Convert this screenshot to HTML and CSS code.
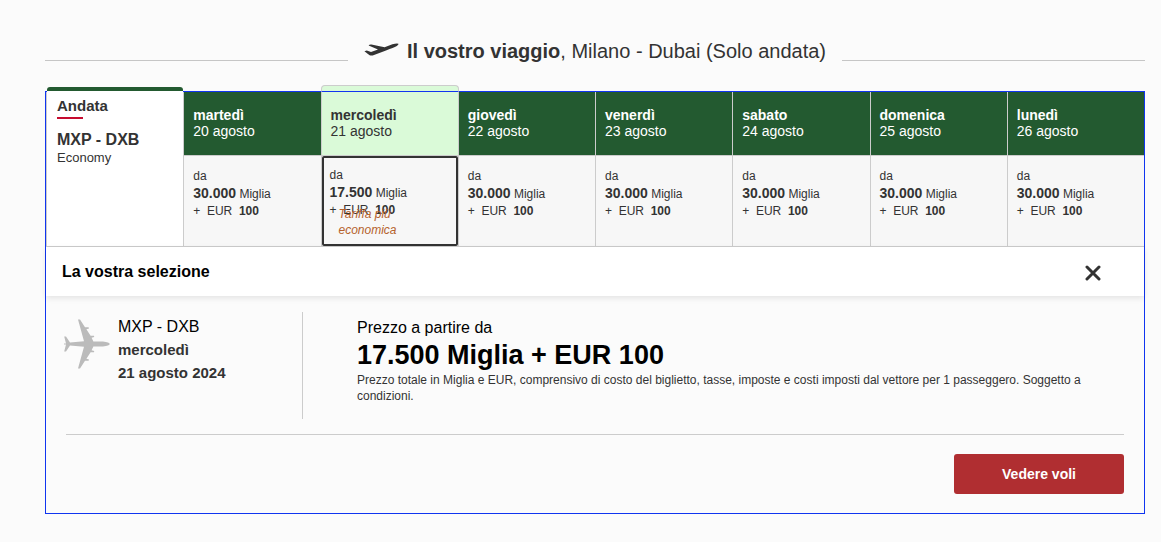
FILE: index.html
```html
<!DOCTYPE html>
<html lang="it">
<head>
    <meta charset="UTF-8">
    <meta name="viewport" content="width=device-width, initial-scale=1.0">
    <title>Il vostro viaggio</title>
    <link rel="stylesheet" href="styles.css">
</head>
<body>
    <main class="page">
        <div class="trip-title">
            <svg class="takeoff" width="35" height="14" viewBox="0 0 35 14">
                <path fill="#333" d="M0.4 8.2 L2.8 7.4 L7 9 L14 6.6 L4.6 2.4 Q5.4 1.4 7.4 1.6 L20.6 4.2 L28.4 1.2 Q33 -0.1 34.4 0.7 Q35 1.7 32.4 3.2 Q30 4.4 22 7.4 L10 12 Q7.6 12.9 5.6 12.2 Z"/>
            </svg>
            <h1><strong>Il vostro viaggio</strong>, Milano - Dubai (Solo andata)</h1>
        </div>
        <section class="fares">
            <table class="calendar">
                <thead>
                    <tr>
                        <th class="route" rowspan="2" scope="row">
                            <div class="direction">Andata</div>
                            <div class="airports">MXP - DXB</div>
                            <div class="cabin">Economy</div>
                        </th>
                        <th class="day" scope="col"><b>martedì</b>20 agosto</th>
                        <th class="day active" scope="col"><b>mercoledì</b>21 agosto</th>
                        <th class="day" scope="col"><b>giovedì</b>22 agosto</th>
                        <th class="day" scope="col"><b>venerdì</b>23 agosto</th>
                        <th class="day" scope="col"><b>sabato</b>24 agosto</th>
                        <th class="day" scope="col"><b>domenica</b>25 agosto</th>
                        <th class="day" scope="col"><b>lunedì</b>26 agosto</th>
                    </tr>
                    <tr>
                        <td><button class="price" type="button">da<span><b>30.000</b> Miglia</span><span>+ &nbsp;EUR &nbsp;<strong>100</strong></span></button></td>
                        <td><button class="price selected" type="button">da<span><b>17.500</b> Miglia</span><span>+ &nbsp;EUR &nbsp;<strong>100</strong></span><em>Tariffa più economica</em></button></td>
                        <td><button class="price" type="button">da<span><b>30.000</b> Miglia</span><span>+ &nbsp;EUR &nbsp;<strong>100</strong></span></button></td>
                        <td><button class="price" type="button">da<span><b>30.000</b> Miglia</span><span>+ &nbsp;EUR &nbsp;<strong>100</strong></span></button></td>
                        <td><button class="price" type="button">da<span><b>30.000</b> Miglia</span><span>+ &nbsp;EUR &nbsp;<strong>100</strong></span></button></td>
                        <td><button class="price" type="button">da<span><b>30.000</b> Miglia</span><span>+ &nbsp;EUR &nbsp;<strong>100</strong></span></button></td>
                        <td><button class="price" type="button">da<span><b>30.000</b> Miglia</span><span>+ &nbsp;EUR &nbsp;<strong>100</strong></span></button></td>
                    </tr>
                </thead>
            </table>
            <div class="selection-head">
                <h2>La vostra selezione</h2>
                <button class="close" type="button" aria-label="Chiudi">
                    <svg width="16" height="16" viewBox="0 0 16 16">
                        <path d="M2 2 L14 14 M14 2 L2 14" stroke="#333" stroke-width="3" stroke-linecap="round"/>
                    </svg>
                </button>
            </div>
            <div class="selection">
                <div class="flight">
                    <svg class="plane" width="46" height="50" viewBox="0 0 46 50">
                        <path fill="#bbb" d="M14 0.5 H16 L21 8.3 H24.6 L25 9.5 L22.4 10.3 L26.6 16.8 H30 L30.2 18 L27.6 18.7 L29.4 22.6 H39 Q45.6 23.4 45.8 25 Q45.6 26.6 39 27.4 H29.4 L27.6 31.3 L30.2 32 L30 33.2 H26.6 L22.4 39.7 L25 40.5 L24.6 41.7 H21 L16 49.5 H14 L20 27.8 L6 26.6 L2 32.4 H0.2 L2 25.6 H0 V24.4 H2 L0.2 17.6 H2 L6 23.4 L20 22.2 Z"/>
                    </svg>
                    <div>
                        <p class="leg">MXP - DXB</p>
                        <p class="date">mercoledì<br>21 agosto 2024</p>
                    </div>
                </div>
                <div class="total">
                    <p class="from">Prezzo a partire da</p>
                    <p class="amount">17.500 Miglia + EUR 100</p>
                    <p class="note">Prezzo totale in Miglia e EUR, comprensivo di costo del biglietto, tasse, imposte e costi imposti dal vettore per 1 passeggero. Soggetto a condizioni.</p>
                </div>
            </div>
            <div class="actions">
                <button class="submit" type="button">Vedere voli</button>
            </div>
        </section>
    </main>
</body>
</html>
```

FILE: styles.css
```css
*,
*::before,
*::after{
    margin: 0;
    padding: 0;
    box-sizing: border-box;
}
body{
    background: #fbfbfb;
    color: #333;
    font: 12px/16px "Liberation Sans", Arial, sans-serif;
}
button{
    font: inherit;
    color: inherit;
    border: 0;
    background: none;
    cursor: pointer;
}
.page{
    padding: 40px 16px 28px 45px;
}
.trip-title{
    display: flex;
    align-items: flex-start;
    margin-bottom: 28px;
}
.trip-title::before,
.trip-title::after{
    content: "";
    flex: 1;
    height: 1px;
    margin-top: 20px;
    background: #c6c6c6;
}
.trip-title::before{
    margin-right: 16px;
}
.trip-title::after{
    margin-left: 16px;
}
.takeoff{
    margin: 3px 8px 0 0;
}
.trip-title h1{
    font-size: 20px;
    font-weight: normal;
    line-height: 23px;
}
.fares{
    border: 1px solid #1035f0;
}
.calendar{
    width: 100%;
    table-layout: fixed;
    border-spacing: 0;
    text-align: left;
}
.calendar th,
.calendar td{
    border-left: 1px solid #ccc;
    border-bottom: 1px solid #ccc;
    vertical-align: top;
}
.calendar .route{
    position: relative;
    padding: 5px 10px;
    background: #fff;
}
.route::before{
    content: "";
    position: absolute;
    top: -5px;
    left: 0;
    right: 0;
    height: 4px;
    background: #235a30;
    border-radius: 3px 3px 0 0;
    box-shadow: 0 1px #fff;
}
.direction{
    font-size: 15px;
    line-height: 18px;
}
.direction::after{
    content: "";
    display: block;
    width: 26px;
    height: 2px;
    margin: 2px 0 12px;
    background: #c60c30;
}
.airports{
    font-size: 16px;
    line-height: 18px;
}
.cabin{
    font-size: 13px;
    font-weight: normal;
    line-height: 18px;
}
.calendar .day{
    height: 64px;
    padding: 15px 9px;
    background: #235a30;
    color: #fff;
    font-size: 14px;
    font-weight: normal;
    line-height: 16px;
}
.day b{
    display: block;
}
.calendar .active{
    position: relative;
    background: #dafad8;
    color: #333;
}
.active::before{
    content: "";
    position: absolute;
    top: -7px;
    left: -1px;
    right: -1px;
    height: 7px;
    background: #dafad8;
    border: 1px solid #ccc;
    border-bottom-color: #1035f0;
    border-radius: 4px 4px 0 0;
}
.price{
    display: flex;
    flex-direction: column;
    justify-content: flex-start;
    position: relative;
    width: 100%;
    height: 90px;
    padding: 12px 9px;
    background: #f7f7f7;
    text-align: left;
    line-height: 17px;
}
.price b{
    font-size: 14px;
}
.price.selected{
    padding: 9px 6px;
    border: 2px solid #333;
    border-radius: 2px;
}
.price em{
    position: absolute;
    top: 48px;
    left: 15px;
    right: 40px;
    color: #b5622c;
    line-height: 16px;
}
.selection-head{
    display: flex;
    justify-content: space-between;
    align-items: center;
    position: relative;
    height: 49px;
    padding: 0 42px 0 16px;
    background: #fff;
    box-shadow: 0 2px 6px rgba(0,0,0,0.1);
}
.selection-head h2{
    color: #000;
    font-size: 16px;
}
.close{
    display: flex;
    padding: 4px 1px 2px;
}
.selection{
    display: flex;
    margin: 16px 20px 0;
    padding-bottom: 15px;
    border-bottom: 1px solid #ccc;
}
.flight{
    display: flex;
    flex: 0 0 237px;
    min-height: 107px;
    border-right: 1px solid #ccc;
}
.plane{
    margin: 7px 8px 0 -2px;
}
.leg{
    margin-top: 5px;
    color: #000;
    font-size: 16px;
    line-height: 20px;
}
.date{
    margin-top: 1px;
    font-size: 15px;
    font-weight: bold;
    line-height: 23px;
}
.total{
    flex: 1;
    padding: 5px 16px 0 54px;
}
.from{
    color: #000;
    font-size: 16px;
    line-height: 22px;
}
.amount{
    color: #000;
    font-size: 27px;
    font-weight: bold;
    line-height: 33px;
}
.actions{
    display: flex;
    justify-content: flex-end;
    padding: 19px 20px;
}
.submit{
    width: 170px;
    height: 40px;
    background: #b02e31;
    border-radius: 3px;
    color: #fff;
    font-size: 14px;
    font-weight: bold;
}
```
